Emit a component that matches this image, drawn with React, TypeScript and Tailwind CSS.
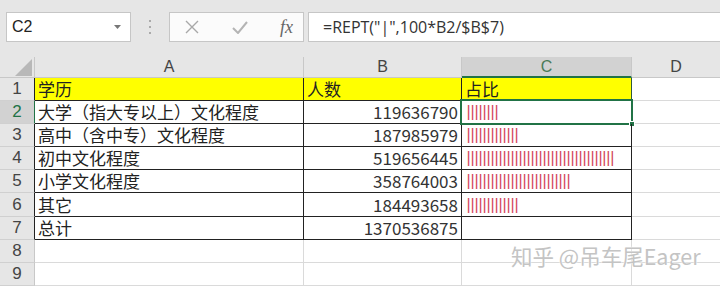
import React from 'react';

const TOTAL = 1370536875;

const data = [
  { name: '大学（指大专以上）文化程度', count: 119636790 },
  { name: '高中（含中专）文化程度', count: 187985979 },
  { name: '初中文化程度', count: 519656445 },
  { name: '小学文化程度', count: 358764003 },
  { name: '其它', count: 184493658 },
];

const cjk = "font-['Noto_Sans_CJK_SC','Noto_Sans',sans-serif]";
const line = 'border-[#222]';
const grid = 'border-[#dadada]';

const RowHead = ({ n, active, inTable, tall }: { n: number; active?: boolean; inTable?: boolean; tall?: boolean }) => (
  <div
    className={`${tall ? 'h-[24px]' : 'h-[23px]'} flex items-center justify-center border-b border-r border-b-[#d0d0d0] text-[17px] font-['Liberation_Sans',sans-serif] ${
      active ? 'bg-[#d2d2d2] text-[#217346] border-r-[#217346]' : inTable ? 'bg-[#e6e6e6] text-[#444] border-r-[#222]' : 'bg-[#e6e6e6] text-[#444] border-r-[#c8c8c8]'
    }`}
  >
    {n}
  </div>
);

const App = () => {
  const bars = (c: number) => '|'.repeat(Math.floor((100 * c) / TOTAL));

  return (
    <div className="relative w-[720px] h-[286px] overflow-hidden bg-[#e6e6e6] text-[#222]">
      {/* formula bar */}
      <div className="flex items-start h-[57px] pt-[12px] pl-[6px]">
        <div className="w-[125px] h-[30px] bg-white border border-[#c6c6c6] flex items-center justify-between pl-[5px] pr-[9px]">
          <span className="text-[16px] font-['Liberation_Sans',sans-serif]">C2</span>
          <svg width="7" height="4" viewBox="0 0 7 4"><path d="M0 0h7L3.5 4z" fill="#777" /></svg>
        </div>
        <div className="w-[38px] h-[30px] flex flex-col items-center justify-center gap-[4px]">
          <div className="w-[2px] h-[2px] bg-[#aaa]" />
          <div className="w-[2px] h-[2px] bg-[#aaa]" />
          <div className="w-[2px] h-[2px] bg-[#aaa]" />
        </div>
        <div className="w-[135px] h-[30px] bg-[#fbfbfb] border border-[#c6c6c6] flex items-center pl-[15px] pr-[10px] justify-between">
          <svg width="14" height="14" viewBox="0 0 14 14"><path d="M1 1l12 12M13 1L1 13" stroke="#a8a8a8" strokeWidth="1.4" /></svg>
          <svg width="16" height="13" viewBox="0 0 16 13"><path d="M1 7l5 5L15 1" stroke="#b4b4b4" strokeWidth="2" fill="none" /></svg>
          <span className="text-[18px] italic font-['Liberation_Serif',serif] text-[#666]">fx</span>
        </div>
        <div className="ml-[4px] flex-1 h-[30px] bg-white border border-[#c6c6c6] border-r-0 flex items-center pl-[14px]">
          <span className="text-[16px] font-['Open_Sans',sans-serif] text-[#333]">=REPT("|",100*B2/$B$7)</span>
        </div>
      </div>

      {/* sheet */}
      <div className="grid grid-cols-[35px_269px_158px_170px_1fr] bg-white">
        {/* column headers */}
        <div className="h-[21px] bg-[#e6e6e6] border-b border-r border-[#c8c8c8] flex items-end justify-end pr-[2px] pb-[1px]">
          <svg width="17" height="17" viewBox="0 0 17 17"><path d="M17 0V17H0z" fill="#b8b8b8" /></svg>
        </div>
        {['A', 'B'].map((c) => (
          <div key={c} className="h-[21px] bg-[#e6e6e6] border-b border-r border-[#c8c8c8] flex items-center justify-center text-[16px] text-[#444] font-['Liberation_Sans',sans-serif]">
            {c}
          </div>
        ))}
        <div className="h-[21px] bg-[#d2d2d2] border-b-2 border-b-[#217346] border-r border-r-[#c8c8c8] flex items-center justify-center text-[16px] text-[#4a7a58] font-['Liberation_Sans',sans-serif]">
          C
        </div>
        <div className="h-[21px] bg-[#e6e6e6] border-b border-[#c8c8c8] flex items-center justify-center text-[16px] text-[#444] font-['Liberation_Sans',sans-serif]">
          D
        </div>

        {/* row 1 */}
        <RowHead n={1} inTable />
        <div className={`h-[23px] bg-[#ffff00] border-b border-r ${line} flex items-center pl-[3px] text-[17px] ${cjk}`}>学历</div>
        <div className={`h-[23px] bg-[#ffff00] border-b border-r ${line} flex items-center pl-[3px] text-[17px] ${cjk}`}>人数</div>
        <div className={`h-[23px] bg-[#ffff00] border-b border-r ${line} border-r-[#2f5b3c] flex items-center pl-[3px] text-[17px] ${cjk}`}>占比</div>
        <div className={`h-[23px] border-b ${grid}`} />

        {data.map((d, i) => (
          <React.Fragment key={d.name}>
            <RowHead n={i + 2} active={i === 0} inTable tall={i === 4} />
            <div className={`${i === 4 ? 'h-[24px]' : 'h-[23px]'} border-b border-r ${line} flex items-center pl-[3px] text-[17px] whitespace-nowrap ${cjk}`}>{d.name}</div>
            <div className={`${i === 4 ? 'h-[24px]' : 'h-[23px]'} border-b border-r ${line} flex items-center justify-end pr-[3px] text-[17px] text-[#333] ${cjk}`}>{d.count}</div>
            <div className={`relative ${i === 4 ? 'h-[24px]' : 'h-[23px]'} border-b border-r ${line} flex items-center pl-[4.5px] text-[16px] tracking-[-0.16px] text-[#d4485c] font-['Liberation_Sans',sans-serif] whitespace-nowrap`}>
              {bars(d.count)}
              {i === 0 && (
                <div className="absolute -left-[2px] -top-[2px] -right-[2px] -bottom-[2px] border-2 border-[#217346]">
                  <div className="absolute -right-[4px] -bottom-[4px] w-[6px] h-[6px] bg-[#217346] border border-white" />
                </div>
              )}
            </div>
            <div className={`${i === 4 ? 'h-[24px]' : 'h-[23px]'} border-b ${grid}`} />
          </React.Fragment>
        ))}

        {/* row 7 */}
        <RowHead n={7} inTable />
        <div className={`h-[23px] border-b border-r ${line} flex items-center pl-[3px] text-[17px] ${cjk}`}>总计</div>
        <div className={`h-[23px] border-b border-r ${line} flex items-center justify-end pr-[3px] text-[17px] text-[#333] ${cjk}`}>{TOTAL}</div>
        <div className={`h-[23px] border-b border-r ${line}`} />
        <div className={`h-[23px] border-b ${grid}`} />

        {[8, 9].map((n) => (
          <React.Fragment key={n}>
            <RowHead n={n} />
            <div className={`h-[23px] border-b border-r ${grid}`} />
            <div className={`h-[23px] border-b border-r ${grid}`} />
            <div className={`h-[23px] border-b border-r ${grid}`} />
            <div className={`h-[23px] border-b ${grid}`} />
          </React.Fragment>
        ))}
      </div>

      {/* watermark */}
      <div className={`absolute left-[511px] top-[240px] text-[21.5px] text-[#c4c4c4] whitespace-nowrap ${cjk} [text-shadow:0_0_2px_#fff,0_0_1px_#fff]`}>
        知乎 @吊车尾Eager
      </div>
    </div>
  );
};

export default App;
